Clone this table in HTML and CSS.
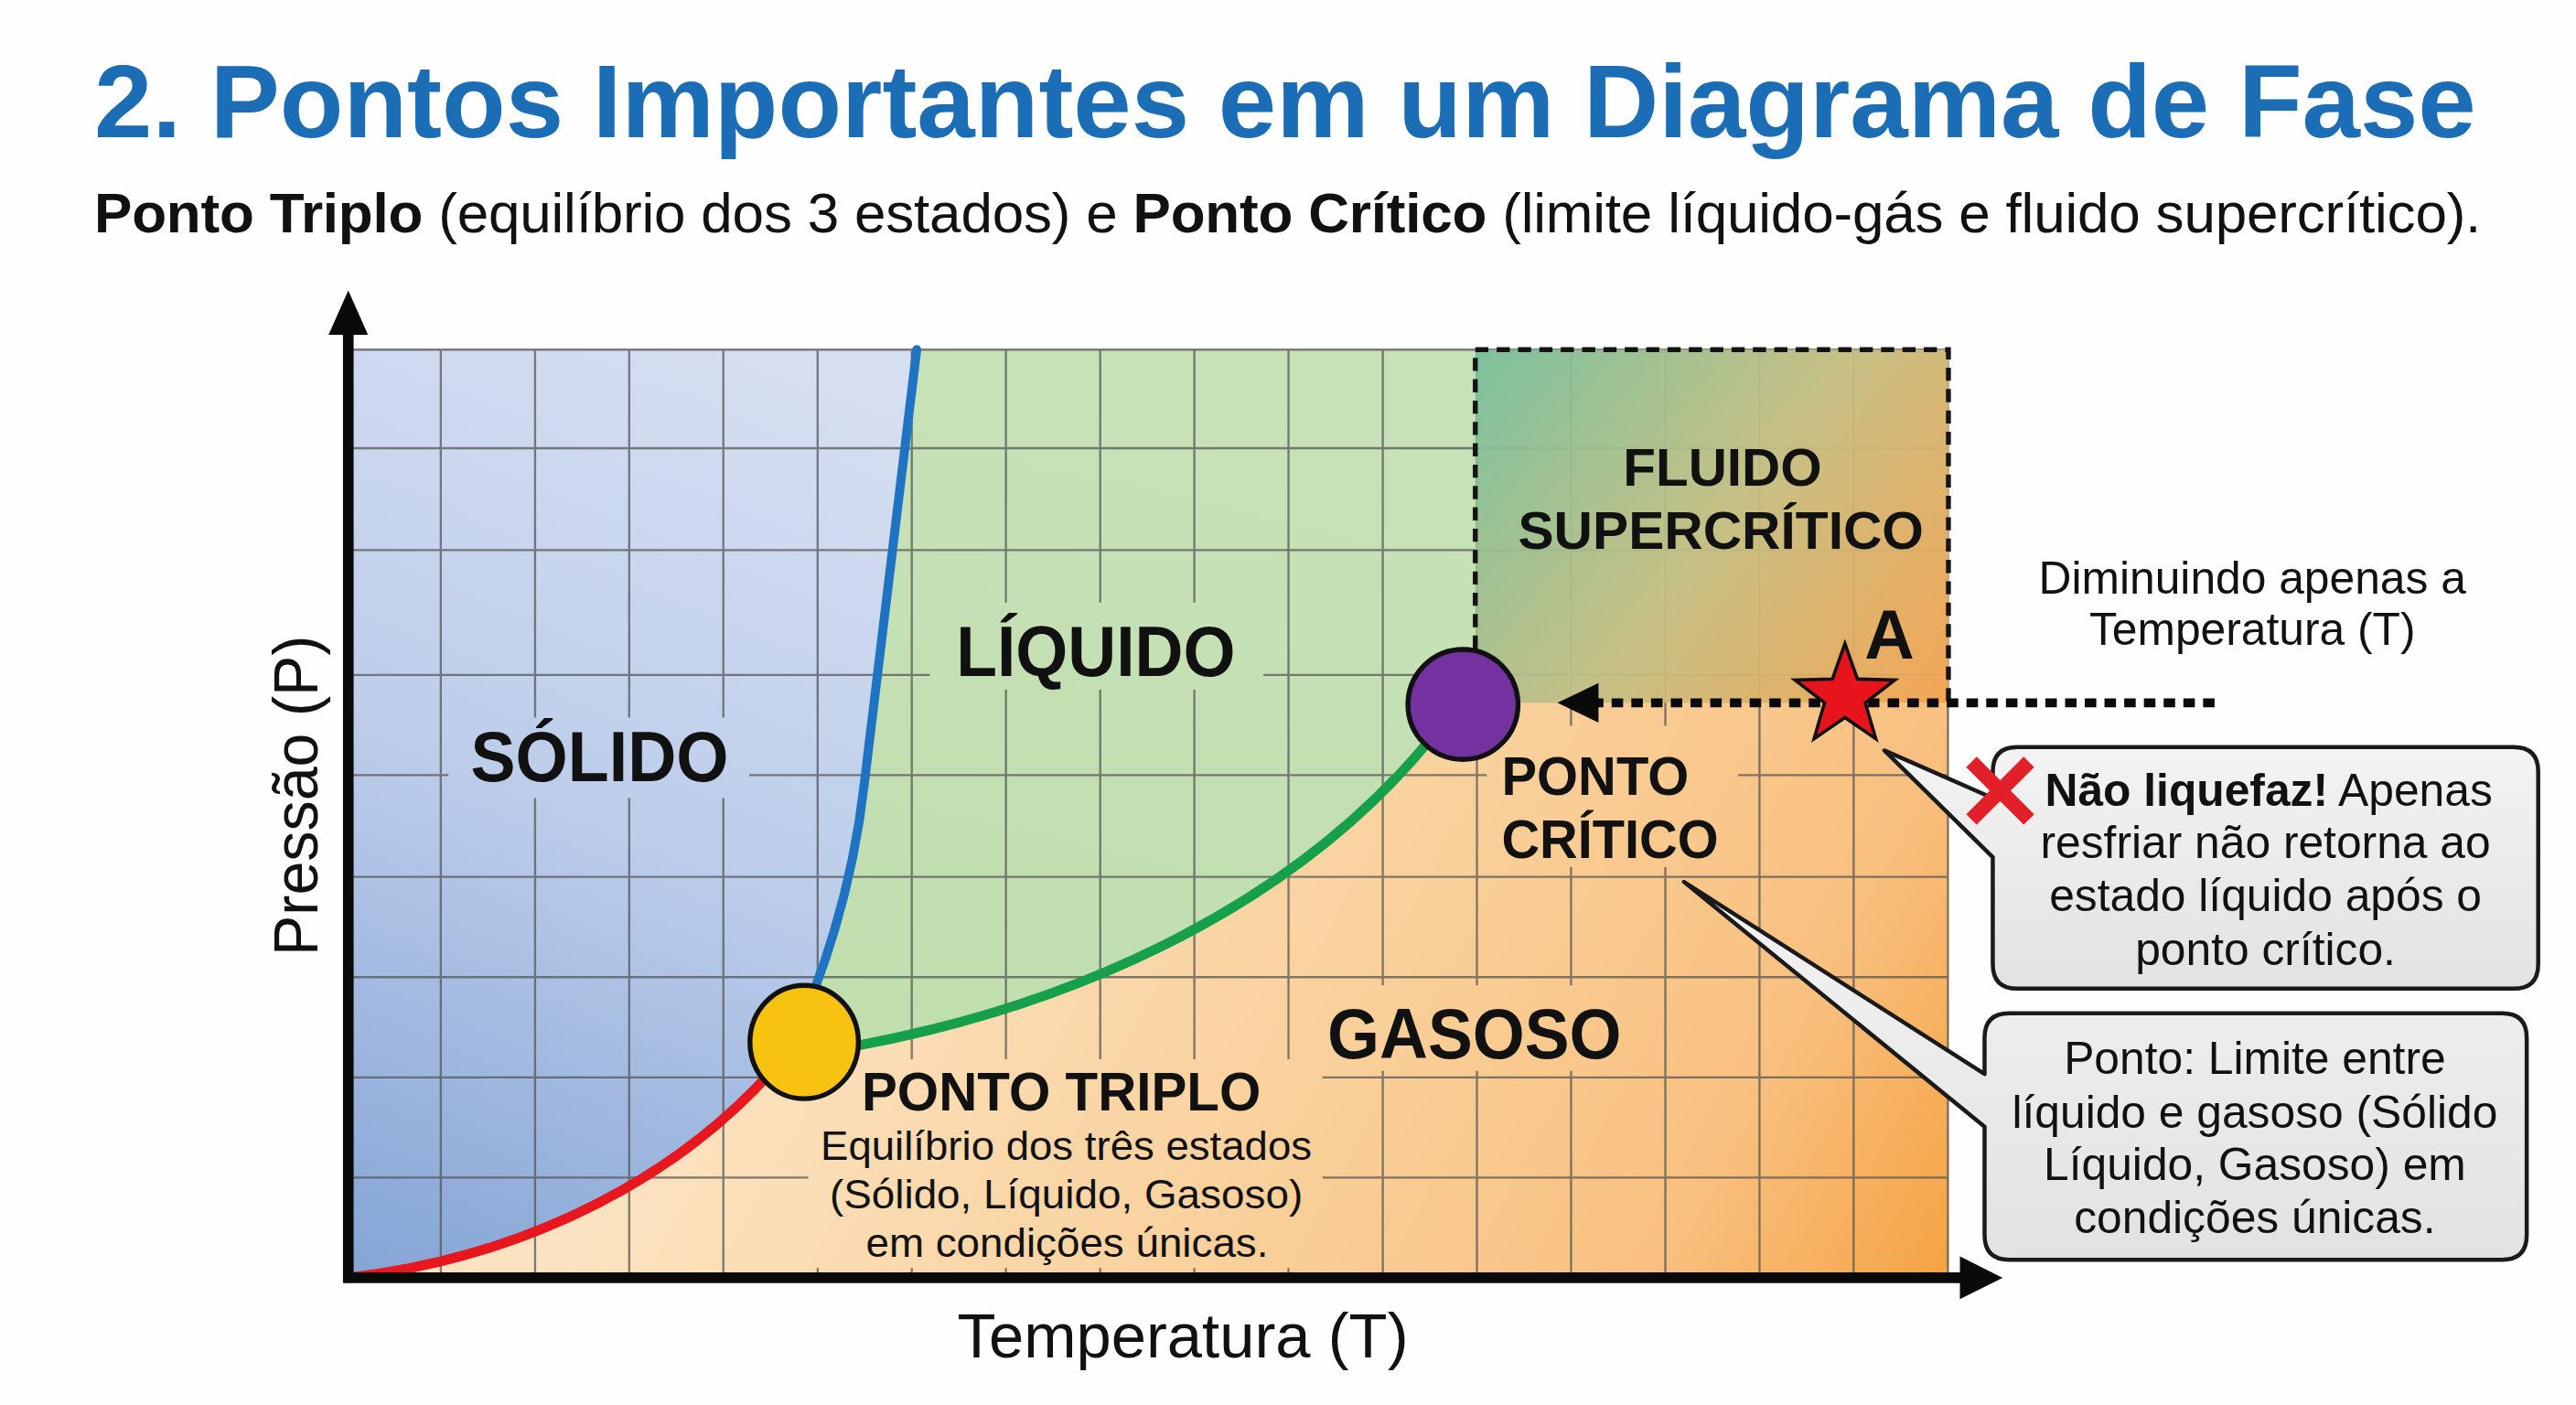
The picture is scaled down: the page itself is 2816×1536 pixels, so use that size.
FILE: index.html
```html
<!DOCTYPE html>
<html lang="pt">
<head>
<meta charset="utf-8">
<title>Pontos Importantes em um Diagrama de Fase</title>
<link rel="stylesheet" href="styles.css">
</head>
<body>
<header class="head">
  <h1 class="title">2. Pontos Importantes em um Diagrama de Fase</h1>
  <p class="subtitle"><b>Ponto Triplo</b> (equilíbrio dos 3 estados) e <b>Ponto Crítico</b> (limite líquido-gás e fluido supercrítico).</p>
</header>
<svg class="chart" viewBox="0 165 1568 690.45" xmlns="http://www.w3.org/2000/svg">
  <defs>
    <linearGradient id="gSolid" gradientUnits="userSpaceOnUse" x1="470" y1="213" x2="240" y2="776">
      <stop offset="0" stop-color="#d6dff1"/>
      <stop offset="0.5" stop-color="#bccdea"/>
      <stop offset="1" stop-color="#86a6d6"/>
    </linearGradient>
    <linearGradient id="gLiquid" gradientUnits="userSpaceOnUse" x1="700" y1="213" x2="600" y2="640">
      <stop offset="0" stop-color="#c8e2b8"/>
      <stop offset="1" stop-color="#c0deae"/>
    </linearGradient>
    <linearGradient id="gGas" gradientUnits="userSpaceOnUse" x1="520" y1="430" x2="1190" y2="790">
      <stop offset="0" stop-color="#fbe3c1"/>
      <stop offset="0.5" stop-color="#f9cf98"/>
      <stop offset="0.78" stop-color="#f8c07f"/>
      <stop offset="1" stop-color="#f5a13e"/>
    </linearGradient>
    <linearGradient id="gSuper" gradientUnits="userSpaceOnUse" x1="900" y1="215" x2="1186" y2="428">
      <stop offset="0" stop-color="#74c09d"/>
      <stop offset="0.5" stop-color="#c2c084"/>
      <stop offset="1" stop-color="#f4a452"/>
    </linearGradient>
    <linearGradient id="gBox" x1="0" y1="0" x2="0" y2="1">
      <stop offset="0" stop-color="#f3f3f3"/>
      <stop offset="1" stop-color="#e2e2e2"/>
    </linearGradient>
  </defs>

  <!-- regions -->
  <rect x="211" y="213" width="975" height="565" fill="url(#gGas)"/>
  <path d="M211 213 L558 213 L527 470 C522 520 512 560 496 602 L470 652 C400 730 300 768 213 778 L211 778 Z" fill="url(#gSolid)"/>
  <path d="M558 213 L898 213 L898 429 L870 451 C780 560 640 615 520 637 L490 634 L496 602 C512 560 522 520 527 470 Z" fill="url(#gLiquid)"/>

  <!-- grid -->
  <path class="grid" d="M268.3 213V777 M325.7 213V777 M383 213V777 M440.3 213V777 M497.7 213V777 M555 213V777 M612.3 213V777 M669.7 213V777 M727 213V777 M784.3 213V777 M841.7 213V777 M899 213V777 M956.3 213V777 M1013.7 213V777 M1071 213V777 M1128.3 213V777 M1185.7 213V777 M211 213H1186 M211 273H1186 M211 335H1186 M211 411H1186 M211 472H1186 M211 534H1186 M211 595H1186 M211 656H1186 M211 717H1186"/>

  <!-- label knockouts -->
  <rect x="273" y="437" width="183" height="49" fill="url(#gSolid)"/>
  <rect x="566" y="367" width="203" height="53" fill="url(#gLiquid)"/>
  <rect x="800" y="600" width="195" height="52" fill="url(#gGas)"/>
  <rect x="905" y="442" width="153" height="86" fill="url(#gGas)"/>
  <rect x="492" y="645" width="313" height="127" fill="url(#gGas)"/>

  <!-- supercritical -->
  <rect x="898" y="213" width="288" height="215" fill="url(#gSuper)" opacity="0.93"/>
  <path class="dash-box" d="M898 395 V213 H1186 V428"/>

  <!-- curves -->
  <path class="curve red" d="M212 778 C300 768 400 730 470 652"/>
  <path class="curve blue" d="M496 602 C511 562 521 522 526 478 L558 213"/>
  <path class="curve green" d="M520 637 C640 615 780 560 870 451"/>

  <!-- axes -->
  <path class="axis" d="M212 202 V781 M209 778 H1196"/>
  <polygon points="212,177 200,204 224,204" fill="#0a0a0a"/>
  <polygon points="1219,778 1193,765 1193,791" fill="#0a0a0a"/>

  <!-- dashed cooling arrow -->
  <path class="dash-arrow" d="M1348 428 H972"/>
  <polygon points="948,428 973,416 973,440" fill="#0a0a0a"/>

  <!-- points -->
  <ellipse cx="489.5" cy="634.5" rx="33" ry="34.5" fill="#f8c210" stroke="#111" stroke-width="3"/>
  <circle cx="890.5" cy="429" r="33.5" fill="#7332a0" stroke="#111" stroke-width="3"/>
  <polygon points="1123,392 1130.6,413.5 1153.4,414.1 1135.4,428 1141.8,449.9 1123,437 1104.2,449.9 1110.6,428 1092.6,414.1 1115.4,413.5" fill="#e8141c" stroke="#111" stroke-width="2" stroke-linejoin="miter"/>

  <!-- region labels -->
  <text class="lbl-xl mid" x="365" y="475.5" textLength="157" lengthAdjust="spacingAndGlyphs">SÓLIDO</text>
  <text class="lbl-xl mid" x="667" y="411.5" textLength="170" lengthAdjust="spacingAndGlyphs">LÍQUIDO</text>
  <text class="lbl-xl mid" x="897.5" y="644.5" textLength="179" lengthAdjust="spacingAndGlyphs">GASOSO</text>
  <text class="lbl-sc mid" x="1048.5" y="296" textLength="121" lengthAdjust="spacingAndGlyphs">FLUIDO</text>
  <text class="lbl-sc mid" x="1047.5" y="334" textLength="247" lengthAdjust="spacingAndGlyphs">SUPERCRÍTICO</text>
  <text class="lbl-a" x="1135" y="401">A</text>
  <text class="lbl-md" x="914" y="484" textLength="114" lengthAdjust="spacingAndGlyphs">PONTO</text>
  <text class="lbl-md" x="914" y="522.5" textLength="132" lengthAdjust="spacingAndGlyphs">CRÍTICO</text>
  <text class="lbl-md mid" x="646" y="676" textLength="243" lengthAdjust="spacingAndGlyphs">PONTO TRIPLO</text>
  <text class="note mid" x="649" y="706.5" textLength="299" lengthAdjust="spacingAndGlyphs">Equilíbrio dos três estados</text>
  <text class="note mid" x="649" y="736" textLength="288" lengthAdjust="spacingAndGlyphs">(Sólido, Líquido, Gasoso)</text>
  <text class="note mid" x="649.5" y="765" textLength="245" lengthAdjust="spacingAndGlyphs">em condições únicas.</text>

  <!-- axis labels -->
  <text class="axis-lbl mid" x="720" y="826.5" textLength="274.5" lengthAdjust="spacingAndGlyphs">Temperatura (T)</text>
  <text class="axis-lbl mid" x="0" y="0" transform="translate(193 484.5) rotate(-90)" textLength="195" lengthAdjust="spacingAndGlyphs">Pressão (P)</text>

  <!-- cooling note -->
  <text class="side mid" x="1371" y="361.5">Diminuindo apenas a</text>
  <text class="side mid" x="1371" y="392.5">Temperatura (T)</text>

  <!-- callout 1 -->
  <path class="callout" d="M1228 455 H1530 Q1545 455 1545 470 V587 Q1545 602 1530 602 H1228 Q1213 602 1213 587 V522 L1147 457 L1213 486 V470 Q1213 455 1228 455 Z"/>
  <path class="xmark" d="M1200 464 L1235 499 M1235 464 L1200 499"/>
  <text class="side mid" x="1381" y="490.5"><tspan class="b">Não liquefaz!</tspan> Apenas</text>
  <text class="side mid" x="1379" y="522.5">resfriar não retorna ao</text>
  <text class="side mid" x="1379" y="555">estado líquido após o</text>
  <text class="side mid" x="1379" y="587.5">ponto crítico.</text>

  <!-- callout 2 -->
  <path class="callout" d="M1223 617 H1523 Q1538 617 1538 632 V752 Q1538 767 1523 767 H1223 Q1208 767 1208 752 V686 L1025 537 L1208 654 V632 Q1208 617 1223 617 Z"/>
  <text class="side mid" x="1372.5" y="654">Ponto: Limite entre</text>
  <text class="side mid" x="1372.5" y="686.5">líquido e gasoso (Sólido</text>
  <text class="side mid" x="1372.5" y="718.5">Líquido, Gasoso) em</text>
  <text class="side mid" x="1372.5" y="750.5">condições únicas.</text>
</svg>
</body>
</html>
```

FILE: styles.css
```css
html, body {
  margin: 0;
  padding: 0;
  background: #fefefe;
}

body {
  width: 2816px;
  height: 1536px;
  overflow: hidden;
  font-family: "Liberation Sans", Arial, sans-serif;
}

.head {
  height: 296px;
  box-sizing: border-box;
  padding: 54px 0 0 103px;
}

.title {
  margin: 0;
  font-size: 114px;
  line-height: 114px;
  font-weight: 700;
  color: #1b6db6;
  white-space: nowrap;
}

.subtitle {
  margin: 34px 0 0;
  font-size: 62px;
  line-height: 62px;
  color: #111;
  letter-spacing: -0.2px;
  white-space: nowrap;
}

.subtitle b {
  font-weight: 700;
}

.chart {
  display: block;
  width: 2816px;
  height: 1240px;
}

.chart text {
  font-family: "Liberation Sans", Arial, sans-serif;
  fill: #111;
}

.mid {
  text-anchor: middle;
}

.b {
  font-weight: 700;
}

.lbl-xl {
  font-weight: 700;
  font-size: 43px;
}

.lbl-sc {
  font-weight: 700;
  font-size: 32px;
}

.lbl-md {
  font-weight: 700;
  font-size: 33px;
}

.lbl-a {
  font-weight: 700;
  font-size: 42px;
}

.note {
  font-size: 25px;
}

.axis-lbl {
  font-size: 38.5px;
}

.side {
  font-size: 27.7px;
}

.grid {
  fill: none;
  stroke: #555;
  stroke-width: 1.3;
  opacity: 0.75;
}

.dash-box {
  fill: none;
  stroke: #141414;
  stroke-width: 3;
  stroke-dasharray: 8 5;
}

.curve {
  fill: none;
  stroke-width: 6;
  stroke-linecap: round;
  stroke-linejoin: round;
}

.curve.red {
  stroke: #e8171d;
}

.curve.blue {
  stroke: #1e74c2;
  stroke-width: 5.5;
}

.curve.green {
  stroke: #17a04b;
}

.axis {
  fill: none;
  stroke: #0a0a0a;
  stroke-width: 6.5;
}

.dash-arrow {
  fill: none;
  stroke: #0a0a0a;
  stroke-width: 5.5;
  stroke-dasharray: 7 5;
}

.callout {
  fill: url(#gBox);
  stroke: #1a1a1a;
  stroke-width: 2.5;
  stroke-linejoin: round;
}

.xmark {
  fill: none;
  stroke: #e3202a;
  stroke-width: 9;
}
```
